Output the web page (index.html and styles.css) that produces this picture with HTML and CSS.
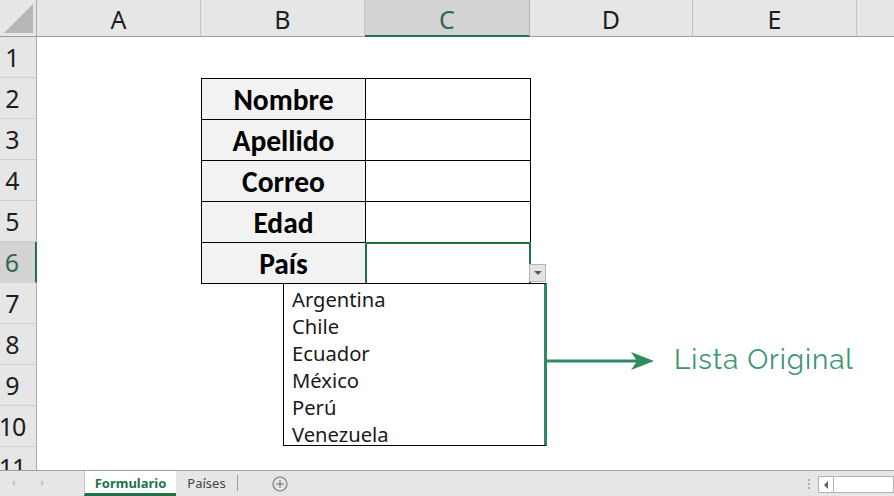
FILE: index.html
```html
<!DOCTYPE html>
<html lang="es">
<head>
<meta charset="utf-8">
<link rel="stylesheet" href="styles.css">
</head>
<body>
<div class="app">
  <div class="sheet">
    <div class="corner"><span class="tri"></span></div>
    <div class="colhdr">A</div>
    <div class="colhdr">B</div>
    <div class="colhdr sel">C</div>
    <div class="colhdr">D</div>
    <div class="colhdr">E</div>
    <div class="colhdr last"></div>

    <div class="form">
      <div class="lbl">Nombre</div><div class="val"></div>
      <div class="lbl">Apellido</div><div class="val"></div>
      <div class="lbl">Correo</div><div class="val"></div>
      <div class="lbl">Edad</div><div class="val"></div>
      <div class="lbl">País</div><div class="val active"></div>
    </div>

    <div class="rowhdr">1</div>
    <div class="rowhdr">2</div>
    <div class="rowhdr">3</div>
    <div class="rowhdr">4</div>
    <div class="rowhdr">5</div>
    <div class="rowhdr sel">6</div>
    <div class="rowhdr">7</div>
    <div class="rowhdr">8</div>
    <div class="rowhdr">9</div>
    <div class="rowhdr">10</div>
    <div class="rowhdr">11</div>

    <div class="dd-btn"><span class="dd-tri"></span></div>
    <ul class="list">
      <li>Argentina</li>
      <li>Chile</li>
      <li>Ecuador</li>
      <li>México</li>
      <li>Perú</li>
      <li>Venezuela</li>
    </ul>
    <svg class="arrow" width="112" height="22" viewBox="0 0 112 22">
      <line x1="0" y1="11" x2="96" y2="11" stroke="#2f8a5f" stroke-width="3"/>
      <polygon points="109,11 86,2 92,11 86,20" fill="#2f8a5f"/>
    </svg>
    <div class="note">Lista Original</div>
  </div>

  <div class="tabs">
    <div class="nav">
      <span class="navl"></span>
      <span class="navr"></span>
    </div>
    <div class="tab active">Formulario</div>
    <div class="tab">Países</div>
    <div class="sep"></div>
    <div class="add">
      <svg width="16" height="16" viewBox="0 0 16 16">
        <circle cx="8" cy="8" r="7" fill="none" stroke="#7a7a7a" stroke-width="1.2"/>
        <line x1="8" y1="4" x2="8" y2="12" stroke="#7a7a7a" stroke-width="1.2"/>
        <line x1="4" y1="8" x2="12" y2="8" stroke="#7a7a7a" stroke-width="1.2"/>
      </svg>
    </div>
    <div class="spacer"></div>
    <div class="dots"><i></i><i></i><i></i></div>
    <div class="hscroll">
      <div class="hs-btn"><span class="hs-tri"></span></div>
      <div class="hs-track"></div>
    </div>
  </div>
</div>
</body>
</html>
```
FILE: styles.css
```css
* { box-sizing: border-box; }
html, body { margin: 0; padding: 0; }
body {
  width: 894px;
  height: 496px;
  overflow: hidden;
  background: #fff;
  font-family: "Noto Sans", "Open Sans", sans-serif;
  color: #222;
}
.app { display: flex; flex-direction: column; width: 894px; height: 496px; }

.sheet {
  position: relative;
  height: 470px;
  overflow: hidden;
  display: grid;
  grid-template-columns: 37px 164px 164px 165px 163px 164px 1fr;
  grid-template-rows: 37px repeat(11, 41px);
  background: #fff;
}

.corner {
  position: relative;
  background: #e6e6e6;
  border-right: 1px solid #ababab;
  border-bottom: 1px solid #9c9c9c;
}
.corner .tri {
  position: absolute;
  right: 3px;
  bottom: 3px;
  width: 0;
  height: 0;
  border-left: 29px solid transparent;
  border-bottom: 29px solid #b7b7b7;
}

.colhdr {
  background: #e6e6e6;
  border-right: 1px solid #c4c4c4;
  border-bottom: 1px solid #9c9c9c;
  display: flex;
  align-items: center;
  justify-content: center;
  font-size: 25px;
  padding-top: 2px;
  color: #1e1e1e;
}
.colhdr.sel {
  background: #d3d3d3;
  color: #2f6a4a;
  border-bottom: 2px solid #217346;
  border-right-color: #b0b0b0;
}
.colhdr.last { border-right: none; }

.rowhdr {
  grid-column: 1;
  background: #e6e6e6;
  border-right: 1px solid #ababab;
  border-bottom: 1px solid #cdcdcd;
  display: flex;
  align-items: center;
  justify-content: center;
  padding-right: 12px;
  font-size: 25px;
  letter-spacing: -1px;
  color: #1e1e1e;
}
.rowhdr.sel {
  background: #d3d3d3;
  color: #2f6a4a;
  border-right: 2px solid #217346;
}

.form {
  grid-column: 3 / 5;
  grid-row: 3 / 8;
  width: 330px;
  height: 206px;
  display: grid;
  grid-template-columns: 163px 164px;
  grid-template-rows: repeat(5, 40px);
  gap: 1px;
  padding: 1px;
  background: #000;
  z-index: 1;
}
.lbl {
  background: #f2f2f2;
  display: flex;
  align-items: center;
  justify-content: center;
  padding-top: 1px;
  font-family: Carlito, Lato, "Noto Sans", sans-serif;
  font-weight: 700;
  font-size: 29.5px;
  color: #000;
}
.val { background: #fff; position: relative; }
.val.active::after {
  content: "";
  position: absolute;
  left: -1px;
  top: -1px;
  right: -1px;
  bottom: 0;
  border: 2px solid #217346;
  border-bottom: none;
}

.dd-btn {
  position: absolute;
  left: 529px;
  top: 264px;
  width: 17px;
  height: 18px;
  background: #e4e4e4;
  border: 1px solid #b5b5b5;
  z-index: 3;
  display: flex;
  align-items: center;
  justify-content: center;
}
.dd-tri {
  width: 0;
  height: 0;
  border-left: 4px solid transparent;
  border-right: 4px solid transparent;
  border-top: 4px solid #5a5a5a;
}

.list {
  position: absolute;
  left: 283px;
  top: 283px;
  width: 264px;
  height: 163px;
  margin: 0;
  padding: 2px 0 0 8px;
  list-style: none;
  background: #fff;
  border: 1px solid #000;
  border-right: 3px solid #2f8a5f;
  z-index: 2;
  font-family: "Noto Sans", sans-serif;
  font-size: 20.2px;
  line-height: 27px;
  color: #1a1a1a;
}

.arrow {
  position: absolute;
  left: 545px;
  top: 350px;
  z-index: 2;
}
.note {
  position: absolute;
  left: 674px;
  top: 343px;
  font-family: Raleway, Lato, "Open Sans", sans-serif;
  font-weight: 400;
  font-size: 28px;
  letter-spacing: 0.9px;
  color: #3d9671;
  z-index: 2;
}

.tabs {
  height: 26px;
  background: #e6e6e6;
  border-top: 1px solid #9f9f9f;
  display: flex;
  align-items: stretch;
  font-size: 13px;
}
.nav {
  width: 84px;
  position: relative;
}
.navl, .navr {
  position: absolute;
  top: 9px;
  width: 0;
  height: 0;
  border-top: 3px solid transparent;
  border-bottom: 3px solid transparent;
}
.navl { left: 12px; border-right: 3px solid #c2c2c2; }
.navr { left: 41px; border-left: 3px solid #c2c2c2; }
.tab {
  display: flex;
  align-items: center;
  justify-content: center;
  color: #444;
}
.tab.active {
  width: 92px;
  background: #fff;
  border-left: 1px solid #c6c6c6;
  border-bottom: 3px solid #217346;
  padding-top: 2px;
  color: #217346;
  font-weight: 700;
}
.tab:not(.active) { width: 61px; padding-bottom: 1px; }
.sep {
  width: 1px;
  background: #9a9a9a;
  margin: 4px 0 5px;
}
.add {
  width: 84px;
  display: flex;
  align-items: center;
  justify-content: center;
}
.spacer { flex: 1; }
.dots {
  width: 16px;
  display: flex;
  flex-direction: column;
  align-items: center;
  justify-content: center;
  gap: 2px;
  margin-right: 1px;
}
.dots i {
  display: block;
  width: 2px;
  height: 2px;
  background: #aaa;
}
.hscroll {
  width: 76px;
  display: flex;
  align-items: center;
  padding-top: 2px;
}
.hs-btn {
  width: 16px;
  height: 17px;
  background: #fff;
  border: 1px solid #b3b3b3;
  display: flex;
  align-items: center;
  justify-content: center;
}
.hs-tri {
  width: 0;
  height: 0;
  border-top: 4px solid transparent;
  border-bottom: 4px solid transparent;
  border-right: 4px solid #606060;
}
.hs-track {
  flex: 1;
  height: 17px;
  background: #fff;
  border: 1px solid #b3b3b3;
  border-left: none;
}
```
